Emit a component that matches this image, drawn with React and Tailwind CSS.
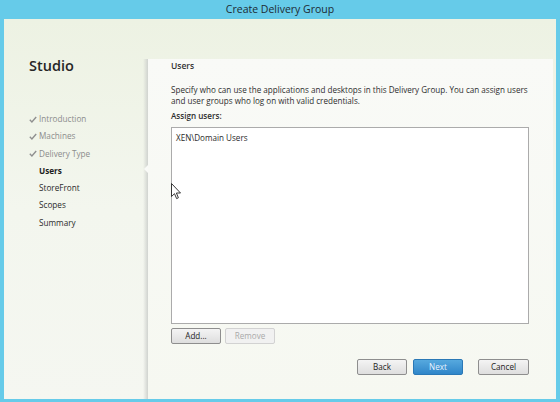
import React from "react";

const F = { fontFamily: '"Open Sans", "Noto Sans", sans-serif' };

function Check() {
  return (
    <svg width="8" height="7" viewBox="0 0 8 7" className="mr-[2px]">
      <path d="M0.8 3.8 L2.9 5.9 L7.2 1" fill="none" stroke="#8f8f8f" strokeWidth="1.4" />
    </svg>
  );
}

function Cursor() {
  return (
    <svg width="11" height="17" viewBox="0 0 11 17" className="absolute left-[171px] top-[183px]">
      <path d="M0.5 0.5 L0.5 13.5 L3.5 10.7 L5.6 15.6 L7.4 14.8 L5.4 10 L9.5 10 Z" fill="#ffffff" stroke="#222" strokeWidth="0.9" strokeLinejoin="round" />
    </svg>
  );
}

export default function App() {
  const nav = [
    { t: "Introduction", done: true },
    { t: "Machines", done: true },
    { t: "Delivery Type", done: true },
    { t: "Users", cur: true },
    { t: "StoreFront" },
    { t: "Scopes" },
    { t: "Summary" },
  ];
  return (
    <div className="relative w-[560px] h-[402px] bg-[#66cbe9] flex flex-col overflow-hidden" style={F}>
      <div className="h-[19px] flex items-center justify-center text-[10.5px] text-[#1d2a33] pt-[1px]">
        Create Delivery Group
      </div>
      <div className="flex-1 ml-[4px] mr-[4px] mb-[3px] flex bg-gradient-to-b from-[#edf2e3] via-[#f3f6ee] to-[#f5f7f1]">
        <div className="w-[139px] flex flex-col pl-[25px]">
          <div className="mt-[40px] text-[14.5px] font-semibold text-[#262626] leading-none">Studio</div>
          <div className="mt-[37px] flex flex-col">
            {nav.map((n) => (
              <div key={n.t} className="h-[17.3px] flex items-center text-[8.2px]">
                <div className="w-[10px] flex items-center">{n.done ? <Check /> : null}</div>
                <span
                  className={
                    n.done
                      ? "text-[#8c8c8c]"
                      : n.cur
                      ? "text-[#1e1e1e] font-bold"
                      : "text-[#2a2a2a]"
                  }
                >
                  {n.t}
                </span>
              </div>
            ))}
          </div>
        </div>
        <div className="relative w-[5px] mt-[40px] bg-gradient-to-r from-transparent to-[#d0d3cf]">
          <div className="absolute right-0 top-[106px] w-0 h-0 border-y-[4px] border-y-transparent border-r-[4px] border-r-[#f9faf7]" />
        </div>
        <div className="flex-1 mt-[40px] mr-[3px] bg-gradient-to-b from-[#f9faf7] to-[#f6f8f1] flex flex-col pl-[23px] pr-[10px]">
          <div className="text-[8.5px] font-semibold text-[#333] leading-[9px] pt-[2px]">Users</div>
          <div className="mt-[14px] text-[8.1px] text-[#2e2e2e] leading-[11px] whitespace-nowrap">
            Specify who can use the applications and desktops in this Delivery Group. You can assign users
            <br />
            and user groups who log on with valid credentials.
          </div>
          <div className="mt-[4px] text-[8.1px] font-semibold text-[#2e2e2e] leading-[11px]">Assign users:</div>
          <div className="mt-[6px] w-[358px] h-[197px] bg-white border border-[#ababab] pl-[4px] pt-[4px] text-[8.1px] text-[#2a2a2a] leading-[11px]">
            XEN\Domain Users
          </div>
          <div className="mt-[4px] flex gap-[4px]">
            <button className="w-[50px] h-[16px] border border-[#8e8e8e] rounded-[2px] bg-gradient-to-b from-[#f4f4f4] to-[#dedede] text-[8.1px] text-[#222] leading-none">
              Add...
            </button>
            <button className="w-[50px] h-[16px] border border-[#d2d2d2] rounded-[2px] bg-[#f1f1f1] text-[8.1px] text-[#a9a9a9] leading-none">
              Remove
            </button>
          </div>
          <div className="mt-[15px] flex justify-end w-[358px]">
            <button className="w-[50px] h-[16px] border border-[#8e8e8e] rounded-[2px] bg-gradient-to-b from-[#f4f4f4] to-[#dedede] text-[8.1px] text-[#222] leading-none">
              Back
            </button>
            <button className="ml-[6px] w-[50px] h-[16px] border border-[#2a78b6] rounded-[2px] bg-gradient-to-b from-[#56a9de] to-[#2f86c9] text-[8.1px] text-[#eaf5ff] leading-none">
              Next
            </button>
            <button className="ml-[15px] w-[51px] h-[16px] border border-[#8e8e8e] rounded-[2px] bg-gradient-to-b from-[#f4f4f4] to-[#dedede] text-[8.1px] text-[#222] leading-none">
              Cancel
            </button>
          </div>
        </div>
      </div>
      <Cursor />
    </div>
  );
}
